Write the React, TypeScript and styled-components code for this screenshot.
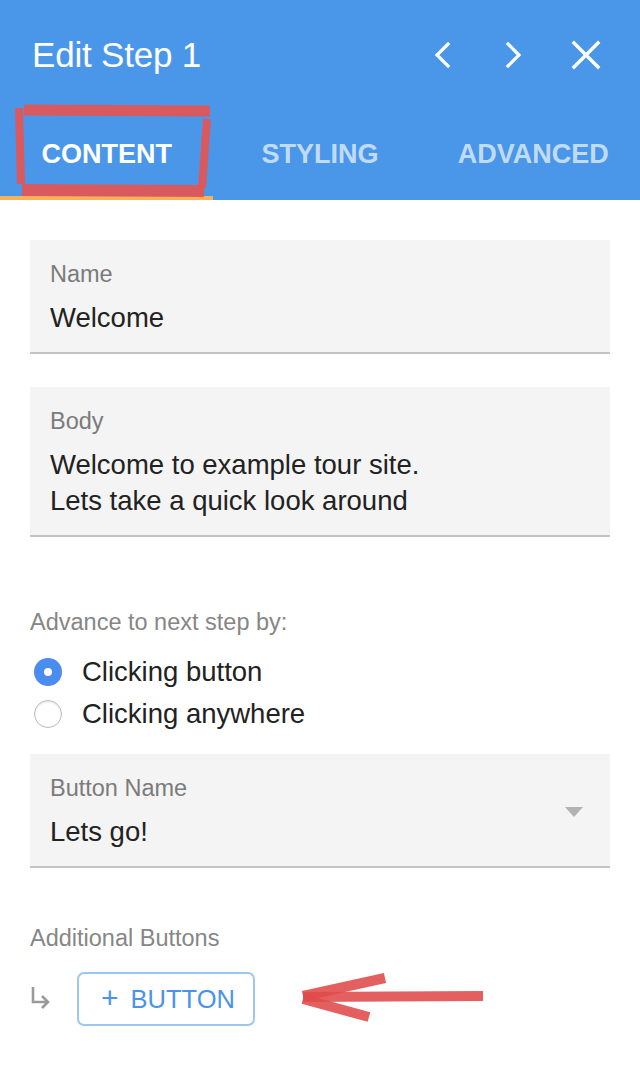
import * as React from "react"
import styled, { createGlobalStyle } from "styled-components"

const GlobalStyle = createGlobalStyle`
    html, body {
        margin: 0;
        padding: 0;
        background: #ffffff;
    }
    body {
        font-family: "Liberation Sans", Arial, Helvetica, sans-serif;
        -webkit-font-smoothing: antialiased;
    }
`

const Panel = styled.div`
    width: 640px;
    min-height: 1080px;
    background: #ffffff;
`

const Header = styled.header`
    background: #4a97ea;
    color: #ffffff;
`

const TitleBar = styled.div`
    height: 110px;
    display: flex;
    align-items: center;
    padding: 0 18px 0 32px;
`

const Title = styled.h1`
    flex: 1;
    margin: 0;
    font-size: 35px;
    font-weight: normal;
    letter-spacing: -0.2px;
`

const IconButton = styled.button`
    width: 72px;
    height: 48px;
    padding: 0;
    border: none;
    background: transparent;
    display: flex;
    align-items: center;
    justify-content: center;
    cursor: pointer;
`

const Tabs = styled.nav`
    display: grid;
    grid-template-columns: repeat(3, 1fr);
    height: 90px;
`

const Tab = styled.div<{ active?: boolean }>`
    position: relative;
    display: flex;
    align-items: center;
    justify-content: center;
    padding-top: 2px;
    font-size: 27px;
    font-weight: bold;
    color: ${p => p.active ? "#ffffff" : "rgba(255, 255, 255, 0.68)"};
    border-bottom: 4px solid ${p => p.active ? "#f7b15a" : "transparent"};
`

const Scribble = styled.svg`
    position: absolute;
    left: 0;
    top: 0;
    overflow: visible;
    pointer-events: none;
`

const Body = styled.main`
    padding: 40px 30px 0;
`

const Field = styled.div<{ gap?: number }>`
    display: flex;
    align-items: center;
    background: #f4f4f4;
    border-bottom: 2px solid #c3c3c3;
    padding: 20px 20px 16px;
    margin-top: ${p => p.gap || 0}px;
`

const FieldText = styled.div`
    flex: 1;
`

const FieldLabel = styled.div`
    font-size: 23.5px;
    line-height: 28px;
    color: #7b7b7b;
    margin-bottom: 12px;
`

const FieldValue = styled.div`
    font-size: 27.5px;
    line-height: 36px;
    color: #222222;
`

const Caret = styled.span`
    width: 0;
    height: 0;
    margin-right: 7px;
    border-left: 9px solid transparent;
    border-right: 9px solid transparent;
    border-top: 10px solid #b3b3b3;
`

const SectionLabel = styled.div<{ gap: number }>`
    margin-top: ${p => p.gap}px;
    font-size: 23.5px;
    line-height: 30px;
    color: #868686;
`

const RadioGroup = styled.div`
    margin: 14px 0 19px;
`

const RadioRow = styled.label`
    display: flex;
    align-items: center;
    height: 42px;
    font-size: 27.5px;
    color: #222222;
`

const RadioDot = styled.span<{ checked?: boolean }>`
    width: 28px;
    height: 28px;
    margin: 0 20px 0 4px;
    box-sizing: border-box;
    border-radius: 50%;
    display: flex;
    align-items: center;
    justify-content: center;
    background: ${p => p.checked ? "#4a8cf0" : "#ffffff"};
    border: ${p => p.checked ? "none" : "1px solid #bcbcbc"};
    box-shadow: ${p => p.checked ? "none" : "inset 0 1px 2px rgba(0,0,0,0.12)"};
    &::after {
        content: "";
        display: ${p => p.checked ? "block" : "none"};
        width: 8px;
        height: 8px;
        border-radius: 50%;
        background: #ffffff;
    }
`

const ButtonRow = styled.div`
    display: flex;
    align-items: center;
    margin-top: 16px;
`

const AddButton = styled.button`
    height: 54px;
    margin-left: 25px;
    padding: 0 18px 0 22px;
    display: flex;
    align-items: center;
    gap: 12px;
    border: 2px solid #9cc7f5;
    border-radius: 7px;
    background: #ffffff;
    color: #4a93ea;
    font-family: "Liberation Sans", Arial, sans-serif;
    font-size: 25.5px;
    cursor: pointer;
`

const Plus = styled.span`
    font-size: 30px;
    font-weight: 300;
    line-height: 1;
    margin-top: -3px;
`

const Chevron = ({ dir }: { dir: "left" | "right" }) =>
<svg width="18" height="26" viewBox="0 0 18 26">
    <path d={dir === "left" ? "M15 2 L4 13 L15 24" : "M3 2 L14 13 L3 24"}
          fill="none" stroke="#fff" strokeWidth="3.2" strokeLinecap="square"/>
</svg>

const Close = () =>
<svg width="30" height="30" viewBox="0 0 30 30">
    <path d="M3 3 L27 27 M27 3 L3 27" fill="none" stroke="#fff" strokeWidth="3.4" strokeLinecap="square"/>
</svg>

const ReturnArrow = () =>
<svg width="22" height="30" viewBox="0 0 22 30">
    <path d="M3 3 L3 18 L17 18 M12 12 L18 18 L12 24" fill="none" stroke="#9a9a9a" strokeWidth="2.6"/>
</svg>

// hand drawn highlight box around the active tab
const TabHighlight = () =>
<Scribble width="213" height="90">
    <g stroke="#e05656" strokeOpacity="0.95" fill="none" strokeLinecap="butt">
        <path d="M24 0 L210 1" strokeWidth="11"/>
        <path d="M19 -2 L21 74" strokeWidth="8"/>
        <path d="M207 9 L202 78" strokeWidth="8"/>
        <path d="M22 80 L204 81" strokeWidth="12"/>
    </g>
</Scribble>

const PointerArrow = () =>
<svg width="200" height="60" viewBox="0 0 200 60" style={{ marginLeft: 42 }}>
    <g stroke="#e04a4a" strokeOpacity="0.88" fill="none" strokeWidth="10">
        <path d="M6 28 L186 27"/>
        <path d="M6 27 L88 9"/>
        <path d="M6 30 L72 48"/>
    </g>
</svg>

interface RadioOption {
    label: string
    checked?: boolean
}

const options: RadioOption[] = [
    { label: "Clicking button", checked: true },
    { label: "Clicking anywhere" },
]

const tabs = ["CONTENT", "STYLING", "ADVANCED"]

const App = () =>
<Panel>
    <GlobalStyle/>
    <Header>
        <TitleBar>
            <Title>Edit Step 1</Title>
            <IconButton><Chevron dir="left"/></IconButton>
            <IconButton><Chevron dir="right"/></IconButton>
            <IconButton><Close/></IconButton>
        </TitleBar>
        <Tabs>
            {tabs.map((t, i) =>
                <Tab key={t} active={i === 0}>
                    {t}
                    {i === 0 && <TabHighlight/>}
                </Tab>
            )}
        </Tabs>
    </Header>
    <Body>
        <Field>
            <FieldText>
                <FieldLabel>Name</FieldLabel>
                <FieldValue>Welcome</FieldValue>
            </FieldText>
        </Field>
        <Field gap={33}>
            <FieldText>
                <FieldLabel>Body</FieldLabel>
                <FieldValue>
                    Welcome to example tour site.<br/>
                    Lets take a quick look around
                </FieldValue>
            </FieldText>
        </Field>

        <SectionLabel gap={70}>Advance to next step by:</SectionLabel>
        <RadioGroup>
            {options.map(o =>
                <RadioRow key={o.label}>
                    <RadioDot checked={o.checked}/>
                    {o.label}
                </RadioRow>
            )}
        </RadioGroup>

        <Field>
            <FieldText>
                <FieldLabel>Button Name</FieldLabel>
                <FieldValue>Lets go!</FieldValue>
            </FieldText>
            <Caret/>
        </Field>

        <SectionLabel gap={55}>Additional Buttons</SectionLabel>
        <ButtonRow>
            <ReturnArrow/>
            <AddButton><Plus>+</Plus>BUTTON</AddButton>
            <PointerArrow/>
        </ButtonRow>
    </Body>
</Panel>

export default App
